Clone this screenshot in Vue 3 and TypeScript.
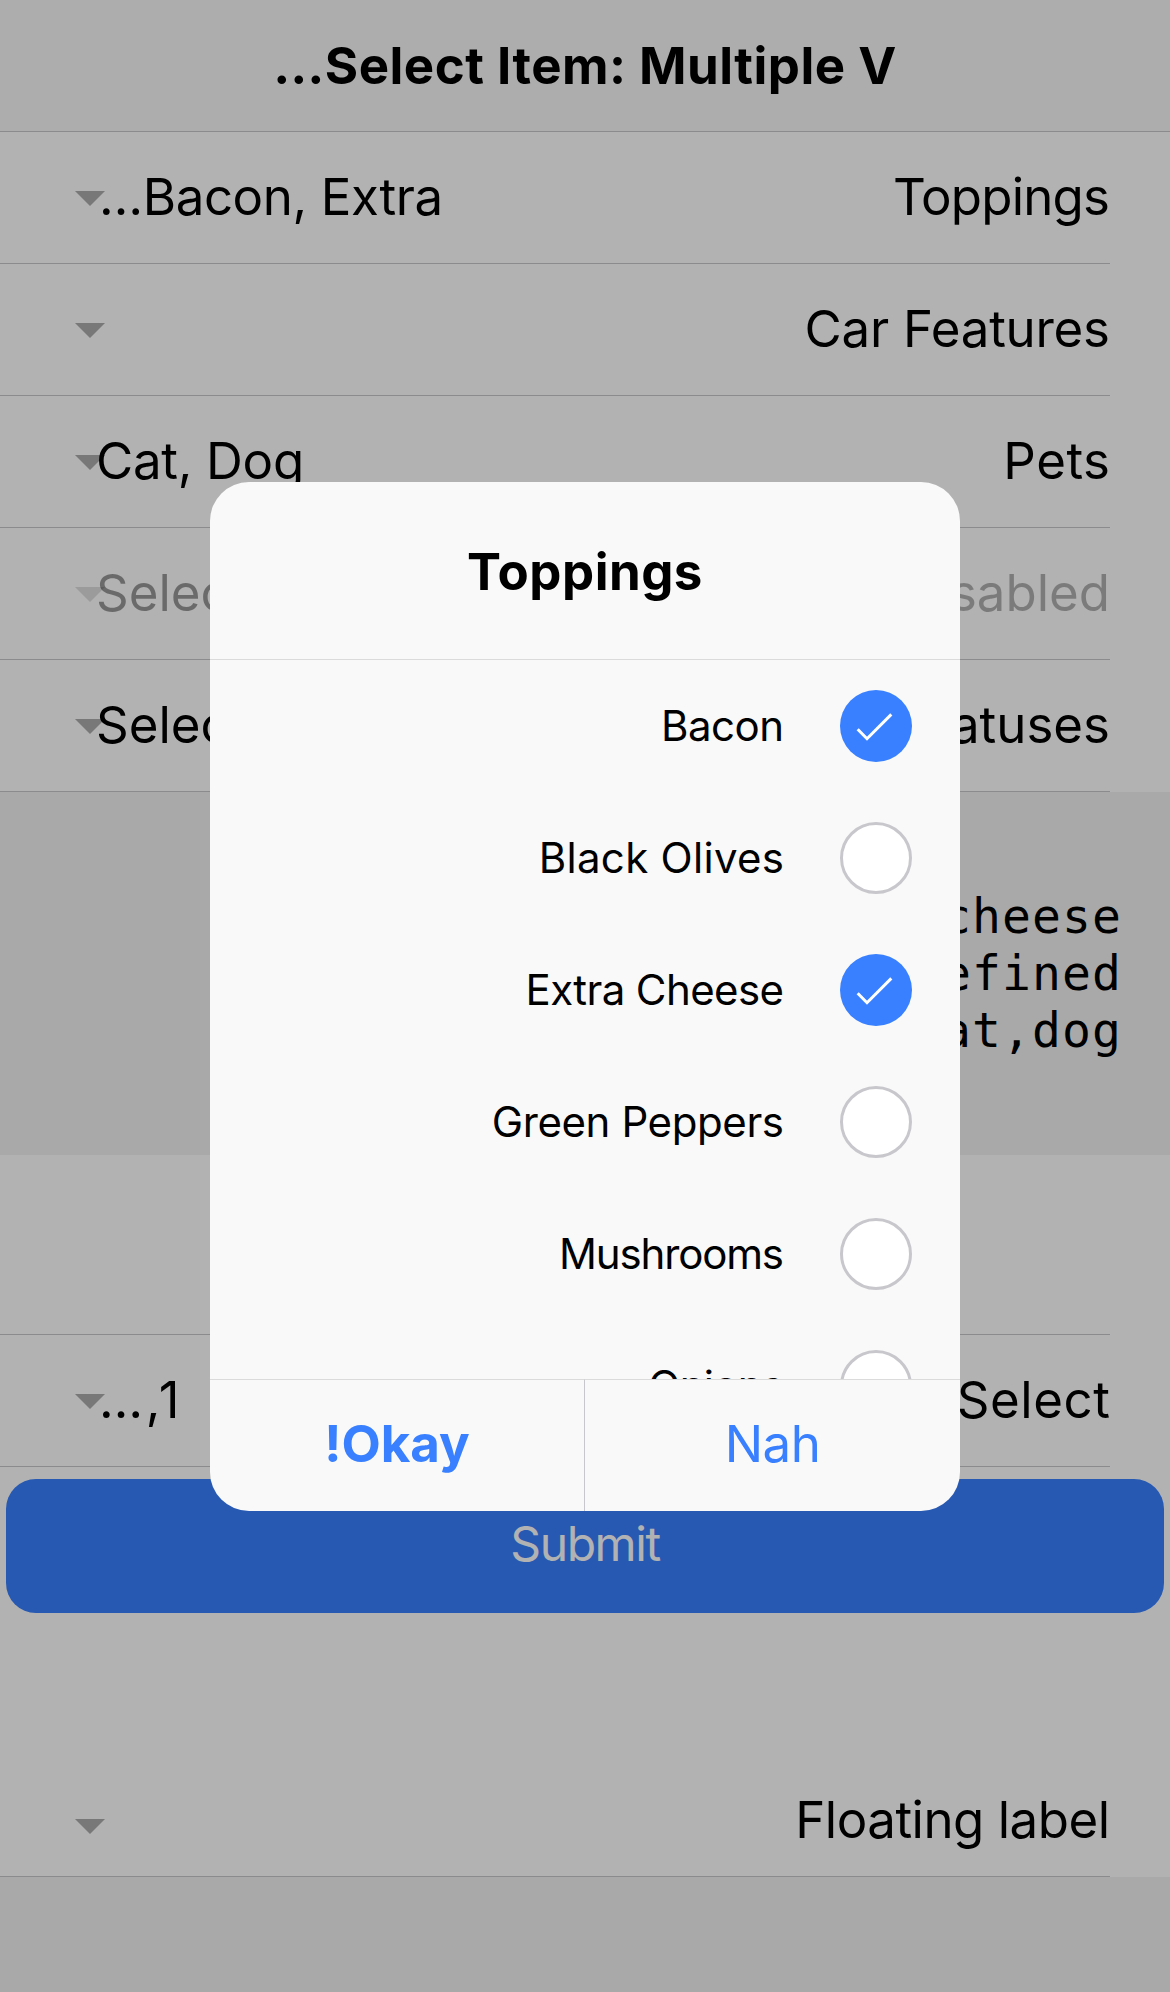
<script setup lang="ts">
interface SelectRow {
  label: string
  value: string
  labelTracking?: number
  valueTracking?: number
  truncated?: boolean
  disabled?: boolean
}

interface Option {
  label: string
  checked: boolean
  tracking: number
}

const rows: SelectRow[] = [
  { label: 'Toppings', value: '…Bacon, Extra', labelTracking: -0.8, valueTracking: -0.4, truncated: true },
  { label: 'Car Features', value: '', labelTracking: -0.25 },
  { label: 'Pets', value: 'Cat, Dog', labelTracking: 0.5, valueTracking: -0.3 },
  { label: 'Disabled', value: 'Select', disabled: true },
  { label: 'Statuses', value: 'Select' },
]

const numericRow: SelectRow = {
  label: 'Select',
  value: '…,1',
  labelTracking: 0.6,
  valueTracking: 2.7,
  truncated: true,
}

const output: string[] = ['bacon,xcheese', 'undefined', 'cat,dog']

const options: Option[] = [
  { label: 'Bacon', checked: true, tracking: -0.5 },
  { label: 'Black Olives', checked: false, tracking: 0.3 },
  { label: 'Extra Cheese', checked: true, tracking: -0.6 },
  { label: 'Green Peppers', checked: false, tracking: -0.4 },
  { label: 'Mushrooms', checked: false, tracking: -1.15 },
  { label: 'Onions', checked: false, tracking: -0.7 },
]

const track = (px = 0) => ({ letterSpacing: `${px}px` })

// Pulls the trailing letter space back out so right-aligned text ends on the edge.
const trackEnd = (px = 0) => ({ letterSpacing: `${px}px`, marginRight: `${-px}px` })
</script>

<template>
  <div class="page">
    <header class="toolbar">
      <h1 class="title">…Select Item: Multiple V</h1>
    </header>

    <div v-for="row in rows" :key="row.label" class="item" :class="{ disabled: row.disabled }">
      <div class="inner">
        <span class="caret"></span>
        <span class="value" :class="{ truncated: row.truncated }" :style="track(row.valueTracking)">{{ row.value }}</span>
        <span class="label" :style="trackEnd(row.labelTracking)">{{ row.label }}</span>
      </div>
    </div>

    <div class="output">
      <code v-for="line in output" :key="line" class="code">{{ line }}</code>
    </div>

    <div class="item spacer"><div class="inner"></div></div>
    <div class="item">
      <div class="inner">
        <span class="caret"></span>
        <span class="value truncated" :style="track(numericRow.valueTracking)">{{ numericRow.value }}</span>
        <span class="label" :style="trackEnd(numericRow.labelTracking)">{{ numericRow.label }}</span>
      </div>
    </div>
    <div class="form-end">
      <button class="submit" type="button">Submit</button>
    </div>
    <div class="item floating">
      <div class="inner">
        <span class="caret"></span>
        <span class="label" :style="trackEnd(-0.5)">Floating label</span>
      </div>
    </div>

    <div class="backdrop">
      <section class="alert" role="dialog">
        <div class="alert-head"><h2 class="title">Toppings</h2></div>
        <div class="options">
          <div v-for="option in options" :key="option.label" class="option">
            <span class="option-label"><span :style="trackEnd(option.tracking)">{{ option.label }}</span></span>
            <span class="check" :class="{ on: option.checked }">
              <svg v-if="option.checked" viewBox="0 0 72 72" width="72" height="72">
                <path d="M17.7 39.2 L27 48.7 L51.3 24.4" fill="none" stroke="#fff" stroke-width="3" />
              </svg>
            </span>
          </div>
        </div>
        <div class="actions">
          <button class="action strong" type="button">!Okay</button>
          <button class="action" type="button">Nah</button>
        </div>
      </section>
    </div>
  </div>
</template>

<style>
body {
  margin: 0;
  background: #f2f2f2;
}
</style>

<style scoped>
.page {
  position: relative;
  box-sizing: border-box;
  height: 1992px;
  overflow: hidden;
  background: #f2f2f2;
  color: #000;
  font-family: Inter, sans-serif;
  font-size: 51px;
  line-height: 60px;
  white-space: nowrap;
}

.toolbar {
  box-sizing: border-box;
  height: 132px;
  padding-top: 1px;
  display: flex;
  align-items: center;
  justify-content: center;
  background: #f8f8f8;
  border-bottom: 1px solid #c8c7cc;
}

.title {
  margin: 0;
  font-size: 51px;
  font-weight: 700;
  letter-spacing: 0.48px;
}

.item {
  height: 132px;
  padding-right: 60px;
  background: #fff;
}

.inner {
  box-sizing: border-box;
  height: 100%;
  padding: 0 0 1px 75px;
  display: flex;
  align-items: center;
  border-bottom: 1px solid #c8c7cc;
}

.caret {
  flex: none;
  margin: 3px -9px 0 0;
  border: 15px solid transparent;
  border-top-color: #acacac;
  border-bottom: 0;
}

.value.truncated {
  padding-left: 3px;
}

.label {
  margin-left: auto;
}

.disabled .caret,
.disabled .value {
  opacity: 0.4;
}

.disabled .label {
  opacity: 0.3;
}

.output {
  box-sizing: border-box;
  height: 363px;
  padding: 96px 48px 0 0;
  text-align: right;
}

.code {
  display: block;
  height: 57px;
  font-family: "DejaVu Sans Mono", monospace;
  font-size: 48px;
  line-height: 56px;
  letter-spacing: 1.1px;
}

.spacer {
  height: 180px;
}

.form-end {
  box-sizing: border-box;
  height: 278px;
  padding: 12px 6px 0;
  background: #fff;
}

.submit {
  width: 100%;
  height: 134px;
  padding: 0 0 4px;
  display: flex;
  align-items: center;
  justify-content: center;
  border: 0;
  border-radius: 30px;
  background: #3880ff;
  color: #fff;
  font: 400 48px/60px Inter, sans-serif;
  letter-spacing: -0.03em;
}

.floating .inner {
  padding-top: 19px;
  padding-bottom: 0;
}

.floating .caret {
  margin-top: 13px;
}

.backdrop {
  position: absolute;
  inset: 0;
  display: flex;
  align-items: center;
  justify-content: center;
  background: rgba(0, 0, 0, 0.3);
}

.alert {
  width: 750px;
  height: 1029px;
  margin-top: 1px;
  display: flex;
  flex-direction: column;
  overflow: hidden;
  border-radius: 39px;
  background: #f9f9f9;
}

.alert-head {
  box-sizing: border-box;
  height: 178px;
  padding-top: 3px;
  display: flex;
  align-items: center;
  justify-content: center;
  border-bottom: 1px solid #dbdbdb;
}

.options {
  height: 719px;
  overflow: hidden;
}

.option {
  height: 132px;
  padding-right: 48px;
  display: flex;
  align-items: center;
  justify-content: flex-end;
  gap: 56px;
}

.option-label {
  font-size: 42px;
  line-height: 50px;
}

.check {
  box-sizing: border-box;
  width: 72px;
  height: 72px;
  border: 3px solid #c8c7cc;
  border-radius: 50%;
  background: #fff;
}

.check.on {
  border: 0;
  background: #3880ff;
}

.check svg {
  display: block;
}

.actions {
  height: 132px;
  display: flex;
}

.action {
  box-sizing: border-box;
  width: 375px;
  padding: 0 0 3px;
  display: flex;
  align-items: center;
  justify-content: center;
  border: 0;
  border-top: 1px solid #dbdbdb;
  background: none;
  color: #3880ff;
  font: 400 51px/60px Inter, sans-serif;
  letter-spacing: -0.5px;
}

.action.strong {
  border-right: 1px solid #c8c7cc;
  font-weight: 700;
  letter-spacing: 0;
}
</style>
